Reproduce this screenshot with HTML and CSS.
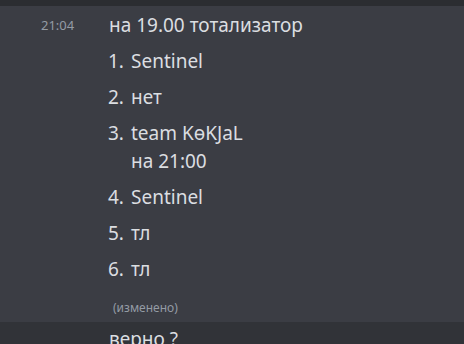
FILE: index.html
```html
<!DOCTYPE html>
<html lang="ru">
<head>
<meta charset="utf-8">
<link rel="stylesheet" href="styles.css">
</head>
<body>
<div class="topbar"></div>
<div class="message hovered">
  <div class="gutter"><span class="time">21:04</span></div>
  <div class="content">
    <div class="line">на 19.00 тотализатор</div>
    <ol class="list">
      <li><span class="num">1.</span><span class="txt">Sentinel</span></li>
      <li><span class="num">2.</span><span class="txt">нет</span></li>
      <li><span class="num">3.</span><span class="txt">team KөKJaL<br>на 21:00</span></li>
      <li><span class="num">4.</span><span class="txt">Sentinel</span></li>
      <li><span class="num">5.</span><span class="txt">тл</span></li>
      <li><span class="num">6.</span><span class="txt">тл</span></li>
    </ol>
    <div class="edited">(изменено)</div>
  </div>
</div>
<div class="message next">
  <div class="gutter"></div>
  <div class="content">
    <div class="line">верно ?</div>
  </div>
</div>
</body>
</html>
```

FILE: styles.css
```css
html, body {
  margin: 0;
  padding: 0;
}
body {
  background: #313338;
  font-family: "Noto Sans", "Open Sans", sans-serif;
  color: #dbdee1;
  overflow: hidden;
  height: 344px;
}
.topbar {
  height: 6px;
  background: #2b2d31;
}
.message {
  display: grid;
  grid-template-columns: 108px 1fr;
}
.message.hovered {
  background: #3b3d44;
  padding: 5px 0 5px;
}
.message.next {
  padding-top: 3px;
}
.gutter {
  padding-left: 41px;
  height: 28px;
  display: flex;
  align-items: center;
}
.time {
  font-size: 13px;
  color: #949ba4;
}
.content {
  font-size: 19px;
  line-height: 28px;
}
.line {
  padding-left: 1px;
}
.list {
  list-style: none;
  margin: 0;
  padding: 0;
}
.list li {
  display: grid;
  grid-template-columns: 23px 1fr;
  margin-top: 8px;
}
.edited {
  font-size: 12px;
  line-height: 18px;
  color: #949ba4;
  margin-top: 16px;
  padding-left: 5px;
}
```
